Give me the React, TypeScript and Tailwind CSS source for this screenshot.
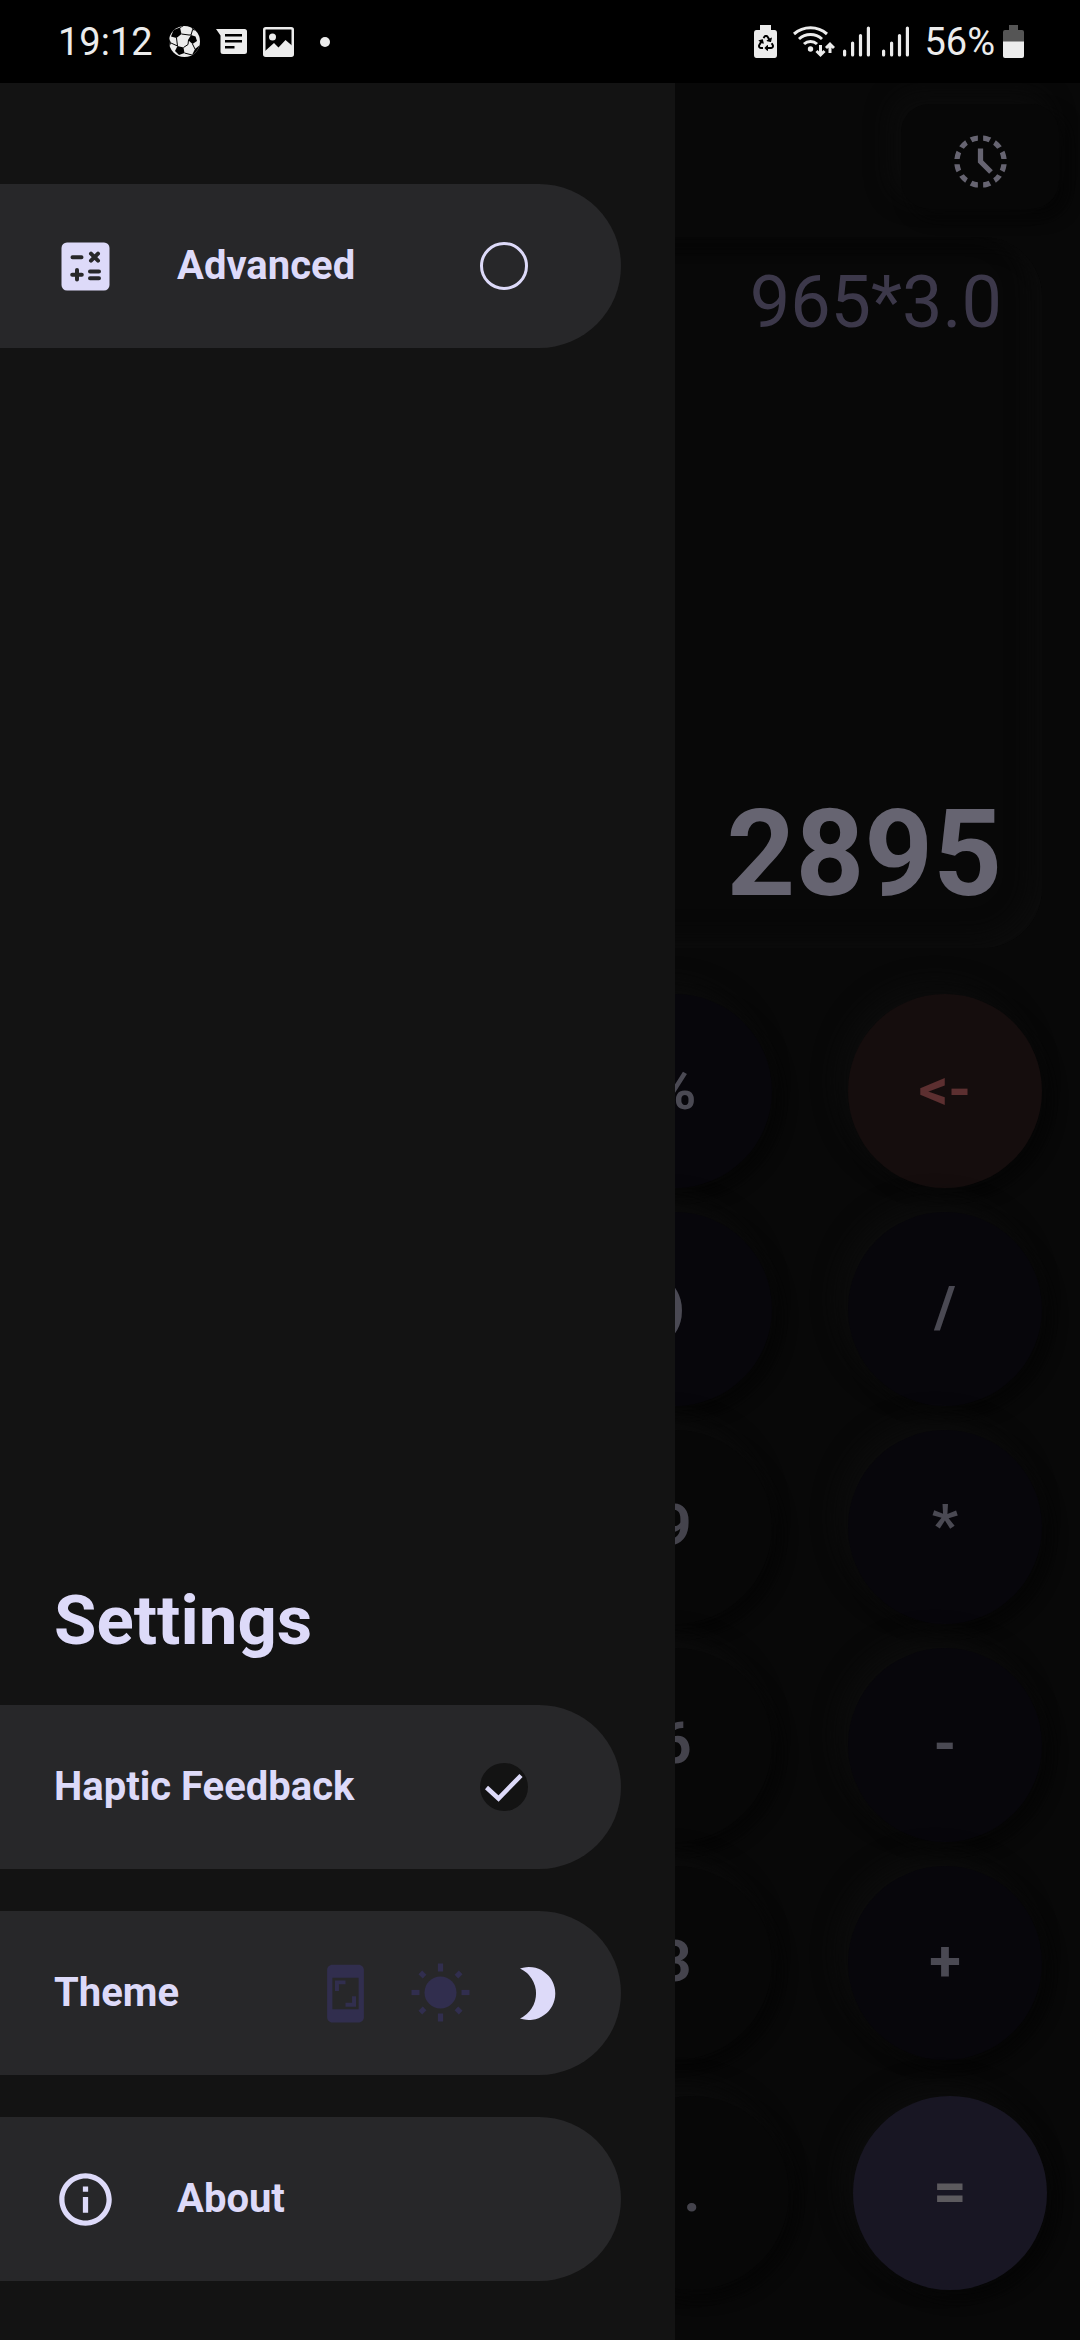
import React, { useState } from "react";
import { MdHistoryToggleOff, MdInfoOutline, MdScreenshot } from "react-icons/md";
import { FaRecycle } from "react-icons/fa";

function FootballIcon() {
  return (
    <svg width="31" height="31" viewBox="0 0 31 31" aria-hidden="true">
      <clipPath id="ball">
        <circle cx="15.500" cy="15.500" r="15.500" />
      </clipPath>
      <g clipPath="url(#ball)">
        <rect width="31" height="31" fill="#ececec" />
        <g fill="#000000">
          <path d="M4.500 4L11 1.500L12.500 8L7.500 12L2 10.500Z" />
          <path d="M22 9L26.500 10.500L28 15L23.500 18L19 14Z" />
          <path d="M8.500 20L14.500 21.500L15.500 27L10 29L6 25Z" />
          <path d="M22 0L29 5L23.500 4Z" />
          <path d="M0 12L2 17L0 22Z" />
          <path d="M26 23L31 19L28 28L23 29Z" />
        </g>
        <path
          fill="none"
          stroke="#000000"
          strokeWidth="1"
          d="M12.500 8L20 9L22 9L23.500 4M7.500 12L8.500 20L2 17M14.500 21.500L19 18.500L19.500 14M23.500 18L26 23M15.500 27L23 29M11 1.500L14 0"
        />
      </g>
    </svg>
  );
}

function MessageIcon() {
  return (
    <svg width="31" height="25" viewBox="0 0 31 25" aria-hidden="true">
      <path
        fillRule="evenodd"
        fill="#ececec"
        d="M0 0H28.500Q31 0 31 2.500V22.500Q31 25 28.500 25H7Q4.500 25 4.500 22.500V6.500ZM9 5V7.500H26V5ZM9 11V13.500H26V11ZM9 17V19.500H18.500V17Z"
      />
    </svg>
  );
}

function PictureIcon() {
  return (
    <svg width="31" height="30" viewBox="0 0 31 30" aria-hidden="true">
      <rect x="1.250" y="1.250" width="28.500" height="27.500" rx="1.500" fill="none" stroke="#ececec" strokeWidth="2.500" />
      <circle cx="9.500" cy="10" r="3.500" fill="#ececec" />
      <path fill="#ececec" d="M1.500 24.500L11 16L15.500 20.500L22.500 13L29.500 19V28.500H1.500Z" />
    </svg>
  );
}

function WifiIcon() {
  return (
    <svg width="42" height="33" viewBox="0 0 42 33" aria-hidden="true" fill="none" stroke="#ececec">
      <path strokeWidth="3" d="M1 9A25 25 0 0 1 34 9" />
      <path strokeWidth="3" d="M6 14A17 17 0 0 1 29 14" />
      <path strokeWidth="3" d="M11 19A9.500 9.500 0 0 1 24 19" />
      <circle cx="17.500" cy="24" r="2.700" fill="#ececec" stroke="none" />
      <path strokeWidth="3" d="M27.500 20V29M23.500 26L27.500 30L31.500 26" />
      <path strokeWidth="3" d="M37 28V19M33 23L37 19L41 23" />
    </svg>
  );
}

function SignalIcon() {
  return (
    <svg width="27" height="31" viewBox="0 0 27 31" aria-hidden="true" stroke="#ececec" strokeWidth="3.200" strokeLinecap="round">
      <path d="M1.600 25V29M9.600 17V29M17.500 9.500V29M25.400 2V29" />
    </svg>
  );
}

function RecycleBatteryIcon() {
  return (
    <span className="relative grid h-[33px] w-[23px] place-items-center">
      <svg className="absolute inset-0" width="23" height="33" viewBox="0 0 23 33" aria-hidden="true">
        <path fill="#ececec" d="M6 0H17V5H20.500Q23 5 23 8V30Q23 33 20.500 33H2.500Q0 33 0 30V8Q0 5 2.500 5H6Z" />
      </svg>
      <FaRecycle className="relative mt-[3px] size-[16px] text-black" />
    </span>
  );
}

function BatteryIcon() {
  return (
    <svg width="21" height="33" viewBox="0 0 21 33" aria-hidden="true">
      <path fill="#555555" d="M6 0H15V5H19Q21 5 21 7V17H0V7Q0 5 2 5H6Z" />
      <path fill="#ececec" d="M0 16.500H21V31Q21 33 19 33H2Q0 33 0 31Z" />
    </svg>
  );
}

function CalculateIcon() {
  return (
    <svg className="size-[63px]" viewBox="0 0 63 63" aria-hidden="true">
      <rect x="7.500" y="7.500" width="48" height="48" rx="5.500" fill="currentColor" />
      <path
        fill="none"
        stroke="#272729"
        strokeWidth="4"
        strokeLinecap="round"
        d="M18.500 22.200H27.500M37 18.700L44 25.700M44 18.700L37 25.700M23 35V44.600M18.200 39.800H27.800M36 36.500H45M36 43.200H45"
      />
    </svg>
  );
}

function CheckIcon() {
  return (
    <svg
      className="pointer-events-none col-start-1 row-start-1 size-[48px]"
      viewBox="0 0 48 48"
      aria-hidden="true"
      fill="none"
      stroke="currentColor"
      strokeWidth="4.500"
    >
      <path d="M6.500 24.500L18.500 35.500L41 12.500" />
    </svg>
  );
}

function SunIcon() {
  return (
    <svg className="size-[63px]" viewBox="-31.500 -30.500 63 63" aria-hidden="true" fill="currentColor">
      <circle r="16" />
      {[0, 90, 180, 270].map((a) => (
        <rect key={a} x="21" y="-2.600" width="8" height="5.200" transform={`rotate(${a})`} />
      ))}
      {[45, 135, 225, 315].map((a) => (
        <rect key={a} x="22.500" y="-2.600" width="6" height="5.200" transform={`rotate(${a})`} />
      ))}
    </svg>
  );
}

function MoonIcon() {
  return (
    <svg className="size-[63px]" viewBox="0 0 63 63" aria-hidden="true" fill="currentColor">
      <path d="M16 6.500A26.500 26.500 0 1 1 16 56.500A27.500 27.500 0 0 0 16 6.500Z" />
    </svg>
  );
}

const ROW = "flex h-[164px] w-[92%] items-center rounded-r-full bg-[#272729] text-left text-[40px] font-bold leading-none";

function Toggle({ label, icon, on, onChange }: { label: string; icon?: React.ReactNode; on: boolean; onChange: () => void }) {
  return (
    <label className={`${ROW} pl-[54px] pr-[93px]`}>
      {icon && <span className="mr-[60px]">{icon}</span>}
      <span className="flex-1">{label}</span>
      <span className="grid size-[48px] place-items-center">
        <input
          type="checkbox"
          checked={on}
          onChange={onChange}
          className="col-start-1 row-start-1 size-[48px] appearance-none rounded-full border-[3px] border-[#dddaf9] checked:border-0 checked:bg-[#131313]"
        />
        {on && <CheckIcon />}
      </span>
    </label>
  );
}

const THEMES = [
  { name: "System", icon: <MdScreenshot className="size-[63px]" /> },
  { name: "Light", icon: <SunIcon /> },
  { name: "Dark", icon: <MoonIcon /> },
];

const RAISED = "shadow-[-10px_-10px_24px_#0c0c0c,8px_8px_16px_#060606]";
const KEY = `grid size-[194px] place-items-center rounded-full pb-[4px] text-[58px] font-bold leading-none ${RAISED}`;
const PLAIN = "bg-[#070707] text-[#44434c]";
const OPERATOR = "bg-[#07060b] text-[#4a4953]";

const KEYS = [
  { label: "%", tone: OPERATOR, col: "col-start-3" },
  { label: "<-", tone: "bg-[#150d0d] text-[#5c2f30]", col: "col-start-4" },
  { label: ")", tone: OPERATOR, col: "col-start-3" },
  { label: "/", tone: OPERATOR, col: "col-start-4" },
  { label: "9", tone: PLAIN, col: "col-start-3" },
  { label: "*", tone: OPERATOR, col: "col-start-4" },
  { label: "6", tone: PLAIN, col: "col-start-3" },
  { label: "-", tone: OPERATOR, col: "col-start-4" },
  { label: "3", tone: PLAIN, col: "col-start-3" },
  { label: "+", tone: OPERATOR, col: "col-start-4" },
];

export default function App() {
  const [advanced, setAdvanced] = useState(false);
  const [haptic, setHaptic] = useState(true);
  const [theme, setTheme] = useState("Dark");

  return (
    <div className="flex min-h-screen flex-col bg-[#080808] font-['Roboto',sans-serif]">
      <header className="flex h-[83px] items-center justify-between bg-black pl-[58px] pr-[56px] text-[38px] leading-none text-[#ececec]">
        <div className="flex items-center gap-[16px]">
          <span>19:12</span>
          <FootballIcon />
          <MessageIcon />
          <PictureIcon />
          <span className="ml-[10px] size-[10px] rounded-full bg-[#ececec]" />
        </div>
        <div className="flex items-center">
          <RecycleBatteryIcon />
          <span className="ml-[16px]"><WifiIcon /></span>
          <span className="ml-[8px]"><SignalIcon /></span>
          <span className="ml-[12px]"><SignalIcon /></span>
          <span className="ml-[15px]">56%</span>
          <span className="ml-[8px]"><BatteryIcon /></span>
        </div>
      </header>

      <div className="relative flex flex-1 flex-col">
        <main className="flex flex-1 flex-col overflow-hidden pb-[50px]">
          <div className="flex justify-end pr-[21px] pt-[21px]">
            <button
              type="button"
              aria-label="History"
              className={`grid h-[105px] w-[158px] place-items-center rounded-[28px] bg-[#070707] pt-[10px] text-[#666471] ${RAISED}`}
            >
              <MdHistoryToggleOff className="size-[63px]" />
            </button>
          </div>

          <section className="mx-[38px] mt-[28px] flex flex-1 flex-col items-end justify-between rounded-[60px] pb-[34px] pr-[40px] pt-[30px] leading-none shadow-[inset_-10px_-10px_24px_#0c0c0c,inset_8px_8px_16px_#060606]">
            <output className="text-[72px] leading-none text-[#3c384a]">965*3.0</output>
            <output className="text-[120px] font-bold leading-none text-[#666471]">2895</output>
          </section>

          <div className="mt-[46px] grid grid-cols-4 justify-items-center gap-y-[24px]">
            {KEYS.map((k) => (
              <button key={k.label} type="button" className={`${KEY} ${k.tone} ${k.col}`}>
                {k.label}
              </button>
            ))}
          </div>
          <div className="mt-[36px] flex justify-end gap-[64px] pr-[33px]">
            <button type="button" className={`${KEY} ${PLAIN}`}>.</button>
            <button type="button" className={`${KEY} bg-[#181623] text-[#5c5a5e]`}>=</button>
          </div>
        </main>

        <aside className="absolute inset-y-0 left-0 flex w-5/8 flex-col gap-[42px] bg-[#131313] pb-[59px] pt-[101px] text-[#dddaf9]">
          <Toggle
            label="Advanced"
            icon={<CalculateIcon />}
            on={advanced}
            onChange={() => setAdvanced(!advanced)}
          />
          <h2 className="mb-[8px] mt-auto pl-[54px] text-[69px] font-bold leading-none">Settings</h2>
          <Toggle label="Haptic Feedback" on={haptic} onChange={() => setHaptic(!haptic)} />
          <div role="radiogroup" aria-label="Theme" className={`${ROW} gap-[32px] px-[54px]`}>
            <span className="flex-1">Theme</span>
            {THEMES.map((t) => (
              <label key={t.name} className="text-[#312e4e] has-checked:text-[#dddaf9]">
                <input
                  type="radio"
                  name="theme"
                  aria-label={t.name}
                  checked={theme === t.name}
                  onChange={() => setTheme(t.name)}
                  className="sr-only"
                />
                {t.icon}
              </label>
            ))}
          </div>
          <button type="button" className={`${ROW} gap-[60px] pl-[54px]`}>
            <MdInfoOutline className="size-[63px]" />
            <span>About</span>
          </button>
        </aside>
      </div>
    </div>
  );
}
